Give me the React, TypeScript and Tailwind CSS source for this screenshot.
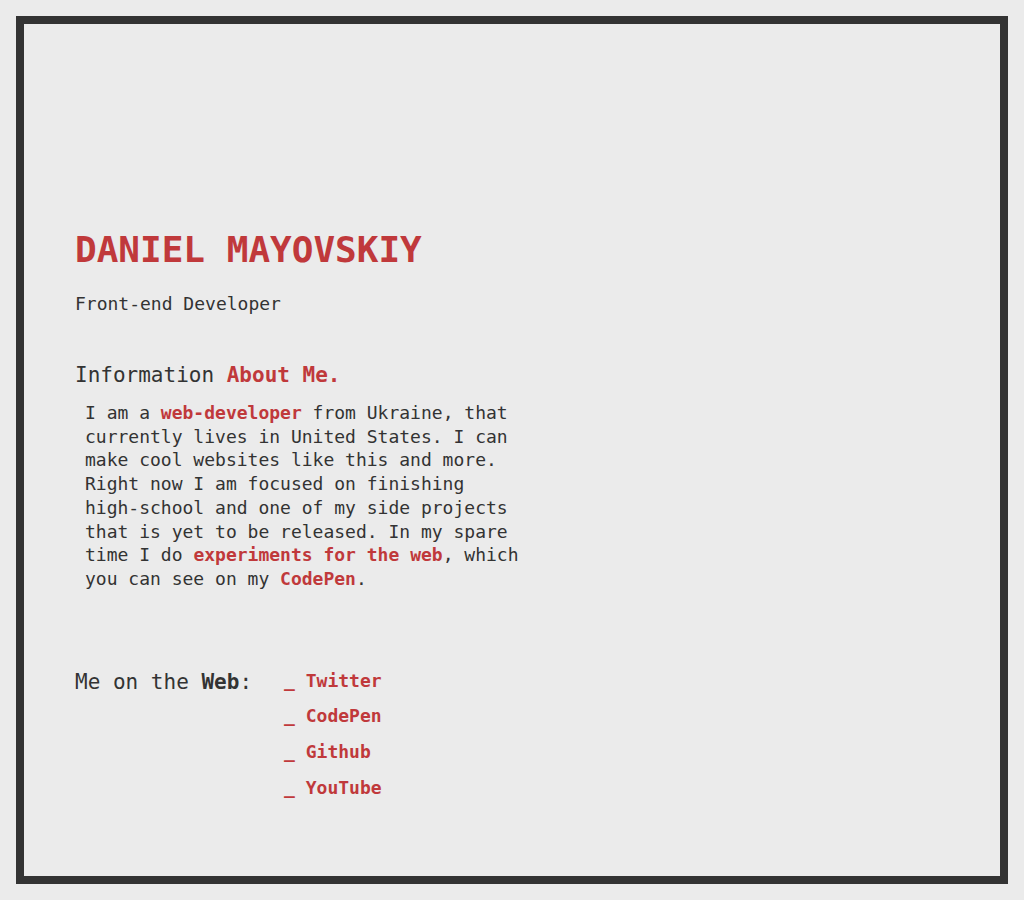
const links = ["Twitter", "CodePen", "Github", "YouTube"];

export default function App() {
  return (
    <div className="min-h-[900px] bg-[#ebebeb] p-4 font-['DejaVu_Sans_Mono',monospace] text-[#333]">
      {/* Framed card */}
      <div className="h-[868px] border-8 border-[#333] pl-[51px] pt-[204px]">
        <h1 className="text-[36px] font-bold leading-[43px] text-[#c0393b]">
          DANIEL MAYOVSKIY
        </h1>
        <p className="mt-[21px] text-[18px] leading-[24px]">Front-end Developer</p>

        {/* About section */}
        <h2 className="mt-[45px] text-[21px] leading-[28px]">
          Information <span className="font-bold text-[#c0393b]">About Me.</span>
        </h2>
        <p className="mt-[12px] w-[450px] pl-[10px] text-[18px] leading-[23.7px]">
          I am a <span className="font-bold text-[#c0393b]">web-developer</span> from
          Ukraine, that currently lives in United States. I can make cool websites like
          this and more. Right now I am focused on finishing high-school and one of my
          side projects that is yet to be released. In my spare time I do{" "}
          <span className="font-bold text-[#c0393b]">experiments for the web</span>, which
          you can see on my <span className="font-bold text-[#c0393b]">CodePen</span>.
        </p>

        {/* Links */}
        <div className="mt-[77px] flex items-start gap-[32px]">
          <div className="text-[21px] leading-[28px]">
            Me on the <span className="font-bold">Web</span>:
          </div>
          <ul className="flex flex-col gap-[11.7px] pt-[1px]">
            {links.map((l) => (
              <li key={l} className="text-[18px] font-bold leading-[24px] text-[#c0393b]">
                _ {l}
              </li>
            ))}
          </ul>
        </div>
      </div>
    </div>
  );
}
